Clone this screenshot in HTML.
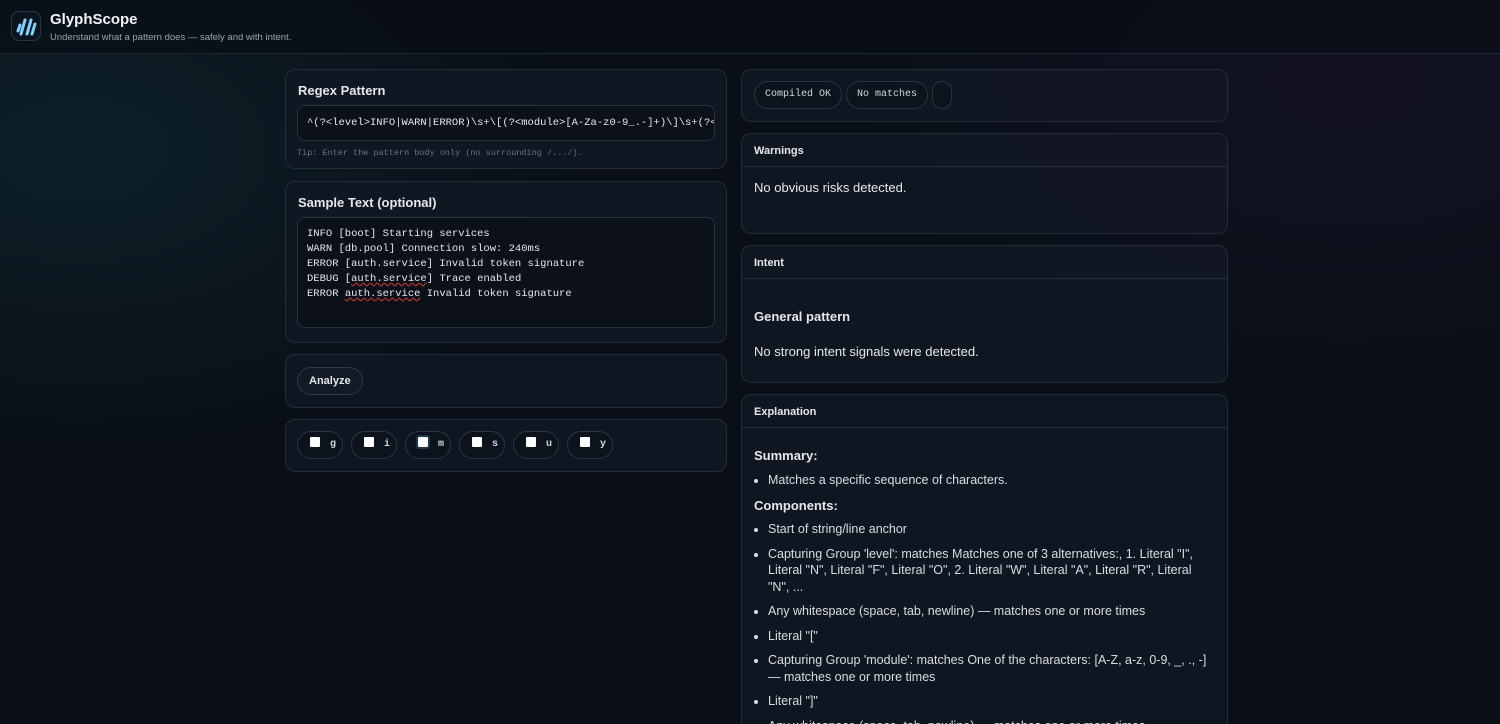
<!DOCTYPE html>
<html style="width:1500px;height:724px;overflow:hidden;background:#0a0f17"><head><meta charset="utf-8"><style>
*{box-sizing:border-box;margin:0;padding:0}
body{width:1500px;height:724px;overflow:hidden;background:#0a0f17;background-image:radial-gradient(ellipse 500px 300px at 80px 150px,rgba(20,70,80,.3),transparent),radial-gradient(ellipse 500px 300px at 1350px 80px,rgba(50,30,80,.22),transparent);font-family:"Liberation Sans",sans-serif;color:#e5e7eb;position:relative}
.hdr{height:54px;border-bottom:1px solid #1c2735;background:rgba(8,12,20,.6);position:relative}
.logo{position:absolute;left:11px;top:11px;width:30px;height:30px;border-radius:8px;background:#0d1420;border:1px solid #2a3646}
.title{position:absolute;left:50px;top:11px;font-size:15px;font-weight:bold;color:#f3f4f6}
.sub{position:absolute;left:50px;top:32px;font-size:9.5px;color:#9ca3af}
.card{position:absolute;background:rgba(17,23,35,.92);border:1px solid #222c3a;border-radius:10px;overflow:hidden}
.mono{font-family:"Liberation Mono",monospace}
.lbl{position:absolute;left:12px;font-size:13px;font-weight:bold;color:#e5e7eb}
.input{position:absolute;left:11px;right:11px;background:#0b1019;border:1px solid #263141;border-radius:8px}
.pill{display:inline-block;height:28px;border:1px solid #2a3443;border-radius:14px;background:#0d131d;font-size:10px;line-height:26px;padding:0 10px;color:#d1d5db;margin-right:4px;vertical-align:top}
.fl .pill{width:46px;margin-right:8px;padding:0 0 0 12px;font-weight:bold}
.chk{display:inline-block;width:10px;height:10px;background:#fff;border-radius:1px;margin-right:10px;vertical-align:-1px}
.sec{position:absolute;left:0;right:0;height:33px;border-bottom:1px solid #222c3a;font-size:11px;font-weight:bold;padding:11px 12px;color:#e5e7eb}
.t{position:absolute;left:12px;font-size:13px;color:#e5e7eb}
ul{position:absolute;left:26px;right:14px;font-size:12.5px;line-height:16.5px;color:#d8dce3}
li{margin-bottom:8px}
</style></head><body>
<div class="hdr">
<div class="logo"><svg width="30" height="30" viewBox="0 0 30 30"><g stroke="#7dd3fc" stroke-width="3" stroke-linecap="round"><path d="M8 13l-2 6"/><path d="M13 8l-4 14"/><path d="M19 8l-4 14"/><path d="M23 12l-3 10"/></g></svg></div>
<div class="title">GlyphScope</div>
<div class="sub">Understand what a pattern does — safely and with intent.</div>
</div>

<div class="card" style="left:285px;top:69px;width:442px;height:100px">
<div class="lbl" style="top:13px">Regex Pattern</div>
<div class="input mono" style="top:35px;height:36px;font-size:10.5px;padding:11px 9px;white-space:nowrap;overflow:hidden;color:#e5e7eb">^(?&lt;level&gt;INFO|WARN|ERROR)\s+\[(?&lt;module&gt;[A-Za-z0-9_.-]+)\]\s+(?&lt;</div>
<div class="mono" style="position:absolute;left:11px;top:78px;font-size:8.5px;color:#6b7280">Tip: Enter the pattern body only (no surrounding /.../).</div>
</div>

<div class="card" style="left:285px;top:181px;width:442px;height:162px">
<div class="lbl" style="top:13px">Sample Text (optional)</div>
<div class="input mono" style="top:35px;height:111px;font-size:10.5px;line-height:15px;padding:9px 9px;color:#e5e7eb">INFO [boot] Starting services<br>WARN [db.pool] Connection slow: 240ms<br>ERROR [auth.service] Invalid token signature<br>DEBUG [<span style="text-decoration:underline wavy #c0392b">auth.service</span>] Trace enabled<br>ERROR <span style="text-decoration:underline wavy #c0392b">auth.service</span> Invalid token signature</div>
</div>

<div class="card" style="left:285px;top:354px;width:442px;height:54px">
<div style="position:absolute;left:11px;top:12px;height:28px;padding:0 11px;border:1px solid #2f3a4a;border-radius:14px;font-size:11px;font-weight:bold;line-height:26px;background:#121a26">Analyze</div>
</div>

<div class="card" style="left:285px;top:419px;width:442px;height:53px">
<div style="position:absolute;left:11px;top:11px" class="mono fl">
<span class="pill"><span class="chk"></span>g</span><span class="pill"><span class="chk"></span>i</span><span class="pill"><span class="chk" style="outline:2px solid #1e3a4a"></span>m</span><span class="pill"><span class="chk"></span>s</span><span class="pill"><span class="chk"></span>u</span><span class="pill"><span class="chk"></span>y</span>
</div></div>

<div class="card" style="left:741px;top:69px;width:487px;height:53px">
<div style="position:absolute;left:12px;top:11px" class="mono"><span class="pill">Compiled OK</span><span class="pill">No matches</span><span class="pill" style="padding:0 9px"></span></div>
</div>

<div class="card" style="left:741px;top:133px;width:487px;height:101px">
<div class="sec" style="top:0">Warnings</div>
<div class="t" style="top:46px">No obvious risks detected.</div>
</div>

<div class="card" style="left:741px;top:245px;width:487px;height:138px">
<div class="sec" style="top:0">Intent</div>
<div class="t" style="top:63px;font-weight:bold">General pattern</div>
<div class="t" style="top:98px">No strong intent signals were detected.</div>
</div>

<div class="card" style="left:741px;top:394px;width:487px;height:340px">
<div class="sec" style="top:0">Explanation</div>
<div class="t" style="top:53px;font-weight:bold">Summary:</div>
<ul style="top:77px"><li>Matches a specific sequence of characters.</li></ul>
<div class="t" style="top:103px;font-weight:bold">Components:</div>
<ul style="top:126px">
<li>Start of string/line anchor</li>
<li>Capturing Group 'level': matches Matches one of 3 alternatives:, 1. Literal "I", Literal "N", Literal "F", Literal "O", 2. Literal "W", Literal "A", Literal "R", Literal "N", ...</li>
<li>Any whitespace (space, tab, newline) — matches one or more times</li>
<li>Literal "["</li>
<li>Capturing Group 'module': matches One of the characters: [A-Z, a-z, 0-9, _, ., -] — matches one or more times</li>
<li>Literal "]"</li>
<li>Any whitespace (space, tab, newline) — matches one or more times</li>
</ul>
</div>
</body></html>
